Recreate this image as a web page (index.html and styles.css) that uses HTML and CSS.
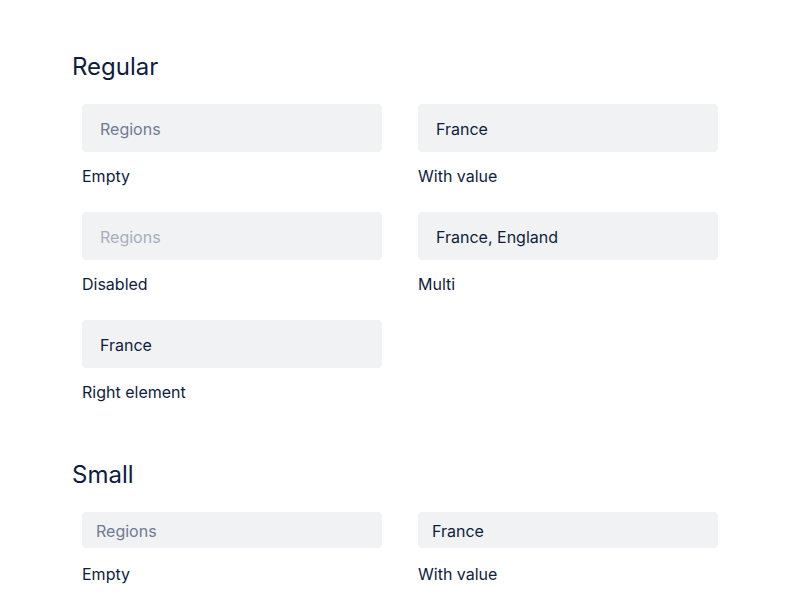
FILE: index.html
```html
<!DOCTYPE html>
<html lang="en">
<head>
<meta charset="utf-8">
<title>Select</title>
<link rel="stylesheet" href="styles.css">
</head>
<body>
<main class="page">
  <section class="section">
    <h2 class="title">Regular</h2>
    <div class="grid">
      <div class="item">
        <div class="field"><span class="placeholder">Regions</span></div>
        <div class="label">Empty</div>
      </div>
      <div class="item">
        <div class="field"><span class="value">France</span></div>
        <div class="label">With value</div>
      </div>
      <div class="item">
        <div class="field"><span class="placeholder disabled">Regions</span></div>
        <div class="label">Disabled</div>
      </div>
      <div class="item">
        <div class="field"><span class="value">France, England</span></div>
        <div class="label">Multi</div>
      </div>
      <div class="item">
        <div class="field"><span class="value">France</span></div>
        <div class="label">Right element</div>
      </div>
    </div>
  </section>
  <section class="section small">
    <h2 class="title">Small</h2>
    <div class="grid">
      <div class="item">
        <div class="field"><span class="placeholder">Regions</span></div>
        <div class="label">Empty</div>
      </div>
      <div class="item">
        <div class="field"><span class="value">France</span></div>
        <div class="label">With value</div>
      </div>
    </div>
  </section>
</main>
</body>
</html>
```
FILE: styles.css
```css
* { box-sizing: border-box; }
html, body { margin: 0; padding: 0; background: #ffffff; }
body {
  font-family: Inter, Lato, "Noto Sans", sans-serif;
  color: #0e1d3d;
  width: 800px;
  height: 600px;
  overflow: hidden;
}
.page {
  padding: 51px 0 0 72px;
}
.section + .section {
  margin-top: 55px;
}
.title {
  margin: 0;
  font-size: 24px;
  line-height: 32px;
  font-weight: 400;
  color: #0e1d3d;
}
.grid {
  margin-top: 21px;
  padding-left: 10px;
  display: grid;
  grid-template-columns: 300px 300px;
  column-gap: 36px;
  row-gap: 24px;
}
.field {
  height: 48px;
  background: #f1f2f4;
  border-radius: 4px;
  padding: 1px 18px 0;
  display: flex;
  align-items: center;
  font-size: 16px;
}
.small .field {
  height: 36px;
  padding: 1px 14px 0;
}
.placeholder { color: #6e7b92; }
.placeholder.disabled { color: #a5aebd; }
.value { color: #0e1d3d; }
.label {
  margin-top: 12px;
  font-size: 16px;
  line-height: 24px;
}
.small .label { margin-top: 14px; }
```
